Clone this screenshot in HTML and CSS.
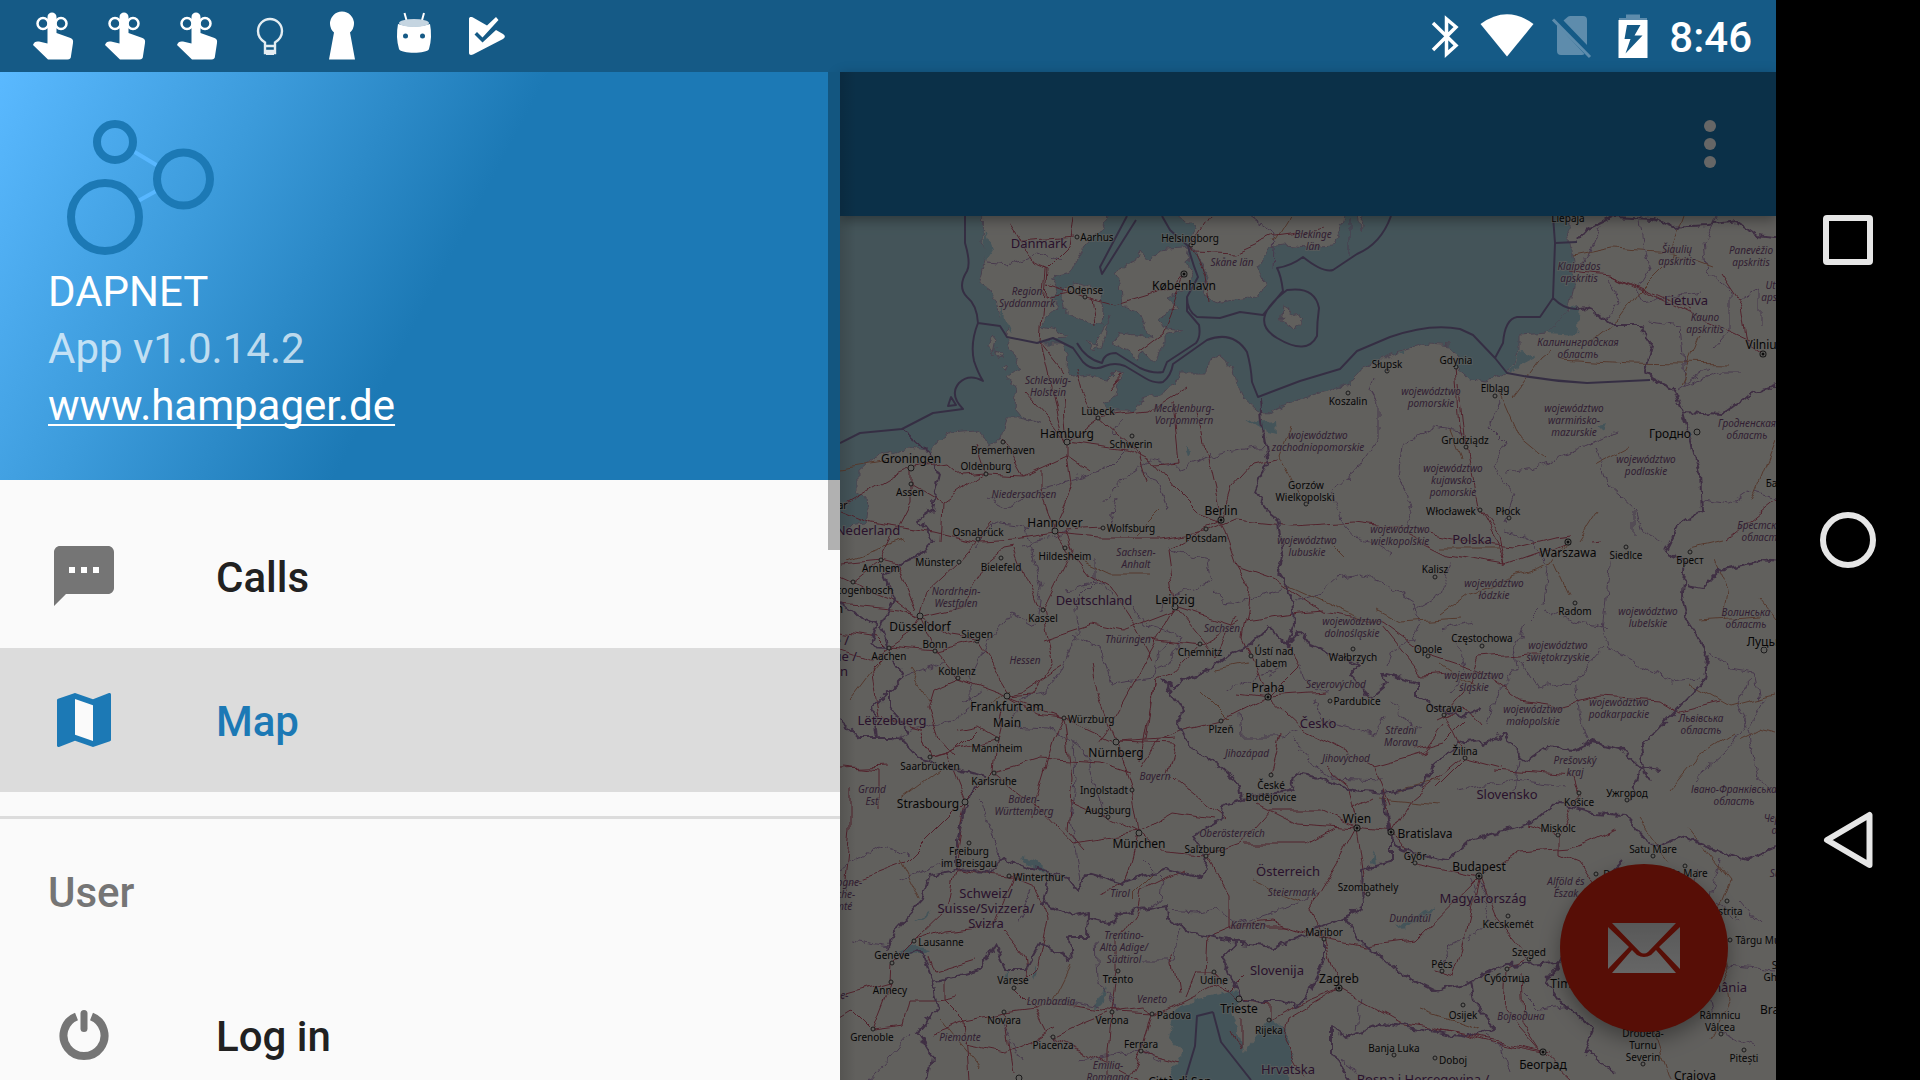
FILE: index.html
```html
<!DOCTYPE html>
<html lang="en">
<head>
<meta charset="utf-8">
<meta name="viewport" content="width=device-width, initial-scale=1">
<title>DAPNET</title>
<link rel="stylesheet" href="styles.css">
</head>
<body>
<div class="device">
  <div class="screen">
    <header class="status">
      <div class="status-left">
        <svg class="note" viewBox="0 0 72 72" aria-hidden="true"><g id="reminder"><path fill="#fff" d="M29.500 17c0-6 9-6 9 0v16l14 5c2 1 3 2 2.500 5l-2 13c0 2-1 3.500-3.500 3.500H30L15 45c1-3 3-4 6-3.500l8.500 2z"/><circle cx="25" cy="23.500" r="5.500" fill="none" stroke="#fff" stroke-width="2.500"/><circle cx="43" cy="23.500" r="5.500" fill="none" stroke="#fff" stroke-width="2.500"/></g></svg>
        <svg class="note" viewBox="0 0 72 72" aria-hidden="true"><use href="#reminder"/></svg>
        <svg class="note" viewBox="0 0 72 72" aria-hidden="true"><use href="#reminder"/></svg>
        <svg class="note" viewBox="0 0 72 72" aria-hidden="true"><path fill="none" stroke="#e4edf2" stroke-width="2.400" d="M31 53V42.500c-4-2.500-7-6-7-11.500a12 12 0 0 1 24 0c0 5.500-3 9-7 11.500V53zM31 46h10M31 51h10"/><path fill="#e4edf2" d="M32 51h8v4h-8z"/></svg>
        <svg class="note" viewBox="0 0 72 72" aria-hidden="true"><path fill="#fff" d="M28 32.500a12 12 0 1 1 16 0L49 59.500H23z"/></svg>
        <svg class="note" viewBox="0 0 72 72" aria-hidden="true"><path stroke="#fff" stroke-width="2" d="M26.500 13l2.500 9M46 13l-2.500 9"/><path fill="#fff" d="M20 24q16 5 32 0 2.500 13-1 25c-2 5-28 5-30 0q-3.500-12-1-25z"/><ellipse cx="36" cy="23" rx="15" ry="4" fill="#c5d5e1"/><circle cx="27.500" cy="36" r="2.500" fill="#155a86"/><circle cx="44.500" cy="36" r="2.500" fill="#155a86"/></svg>
        <svg class="note" viewBox="0 0 72 72" aria-hidden="true"><path fill="#fff" d="M19 19c0-2 2-2.500 4-1.500l14 8L46 17l2.500 3-16 17.500-5.500-5.500-2.500 2.500 8 8L46 30l7 4c2.500 1.500 2.500 3.500 0 5L23 54.500c-2 1-4 .5-4-1.500z"/></svg>
      </div>
      <div class="status-right">
        <svg class="sys" viewBox="-32 0 63 72" aria-hidden="true"><path fill="none" stroke="#fff" stroke-width="3.500" d="M-12 23L11 45.500 1.500 54V19L11 27-12 50"/></svg>
        <svg class="sys" viewBox="-31 0 63 72" aria-hidden="true"><path fill="#fff" d="M0 56.500L-26.500 24Q0 4.500 26.500 24z"/></svg>
        <svg class="sys" viewBox="-31 0 63 72" aria-hidden="true"><path fill="#5e8cac" d="M-6.500 20.500L-3 17.500q1-1.500 3-1.500H13q4 0 4 4v25zM-13 24.500L14.500 54q-1 1-3 1H-9q-4 0-4-4z"/><path stroke="#5e8cac" stroke-width="3" d="M-17 19.500L20 57"/></svg>
        <svg class="sys" viewBox="-31 0 63 72" aria-hidden="true"><path fill="#5e8cac" d="M-7 14.500H7V18h7v3h-28v-3h7z"/><path fill="#fff" fill-rule="evenodd" d="M-14.500 20h29v38h-29zM-6 25l-2.500 14h6l-5 14.500 17-18H1.500L7.500 25z"/></svg>
        <time class="clock">8:46</time>
      </div>
    </header>

    <div class="app">
      <aside class="drawer">
        <div class="account">
          <svg class="logo" viewBox="48 112 168 144" role="img" aria-label="DAPNET logo"><path stroke="#58b7ff" stroke-width="4" d="M133 151l25 15M138 201l20-11"/><g fill="none" stroke="#1c79b5" stroke-width="8"><circle cx="115" cy="142" r="18"/><circle cx="183.500" cy="179" r="26.500"/><circle cx="105" cy="217" r="34"/></g></svg>
          <p class="name">DAPNET</p>
          <p class="version">App v1.0.14.2</p>
          <a class="site" href="#site">www.hampager.de</a>
        </div>
        <nav class="menu">
          <a class="item" href="#calls"><svg class="icon" viewBox="0 0 24 24" aria-hidden="true"><path fill="#757575" d="M20 2H4c-1.100 0-2 .9-2 2v18l4-4h14c1.100 0 2-.9 2-2V4c0-1.100-.9-2-2-2z"/><path fill="#fff" d="M7 9h2v2H7zM11 9h2v2h-2zM15 9h2v2h-2z"/></svg><span>Calls</span></a>
          <a class="item active" href="#map" aria-current="page"><svg class="icon" viewBox="0 0 24 24" aria-hidden="true"><path fill="#1c79b5" d="M20.500 3l-.16.03L15 5.100 9 3 3.360 4.900c-.21.07-.36.25-.36.48V20.500c0 .28.220.5.500.5l.16-.03L9 18.900l6 2.100 5.640-1.900c.21-.07.36-.25.36-.48V3.500c0-.28-.22-.5-.5-.5z"/><path fill="#fafafa" d="M15 19l-6-2.110V5l6 2.110z"/></svg><span>Map</span></a>
        </nav>
        <nav class="menu user">
          <h2 class="group">User</h2>
          <a class="item" href="#login"><svg class="icon" viewBox="0 -1 72 72" aria-hidden="true"><path fill="none" stroke="#757575" stroke-width="8" d="M28.500 16.500a20.500 20.500 0 1 0 15 0"/><path stroke="#757575" stroke-width="7" stroke-linecap="round" d="M36 13.500v15"/></svg><span>Log in</span></a>
        </nav>
        <div class="scrollbar"></div>
      </aside>

      <main class="content">
        <div class="toolbar">
          <button class="more" type="button" aria-label="More options"><svg viewBox="0 0 72 72" aria-hidden="true"><circle cx="36" cy="18" r="6"/><circle cx="36" cy="36" r="6"/><circle cx="36" cy="54" r="6"/></svg></button>
        </div>
        <div class="map">
          <svg class="chart" viewBox="840 216 936 864" preserveAspectRatio="xMinYMin slice" role="img" aria-label="Map of central Europe">
            <defs>
              <filter id="rough" filterUnits="userSpaceOnUse" x="820" y="196" width="976" height="904"><feTurbulence type="fractalNoise" baseFrequency="0.09" numOctaves="3" seed="4"/><feDisplacementMap in="SourceGraphic" scale="10" xChannelSelector="R" yChannelSelector="G"/></filter>
              <filter id="bend" filterUnits="userSpaceOnUse" x="820" y="196" width="976" height="904"><feTurbulence type="fractalNoise" baseFrequency="0.04" numOctaves="2" seed="9"/><feDisplacementMap in="SourceGraphic" scale="12" xChannelSelector="R" yChannelSelector="G"/></filter>
            </defs>
            <rect class="sea" x="820" y="196" width="980" height="904"/>
            <g class="land" filter="url(#rough)">
              <path d="M820 530L866 524 868 510 867 497 858 493 858 470 873 457 907 448 930 453 937 440 950 432 977 430 982 440 990 445 1000 440 1007 418 1020 418 1040 422 1022 417 1013 407 1015 387 1007 377 1020 367 1005 337 1006 323 997 310 990 290 980 283 987 260 982 243 983 200H1108V216L1103 230 1090 237 1078 257 1070 273 1053 277 1057 287 1053 297 1058 307 1047 317 1042 327 1057 330 1068 337 1053 338 1040 343 1060 343 1068 353 1067 370 1073 377 1087 375 1107 380 1117 370 1125 373 1117 383 1115 397 1103 405 1107 410 1127 410 1133 413 1140 400 1163 392 1177 383 1180 373 1207 373 1208 360 1220 355 1233 367 1237 383 1243 397 1257 410 1267 414 1297 400 1327 392 1347 385 1360 370 1373 363 1393 353 1430 343 1450 345 1460 357 1457 370 1470 379 1487 381 1507 373 1520 353 1520 335 1547 333 1567 313 1573 287 1573 263 1568 230V200H1800V1100H820z"/>
              <path d="M1060 297l3-9 17-6 20 8 3 20-1 15-15-2-14-6-11-10zM1113 273l24-13 3-10 10 12 10-12 30-3-3 13 5 17-9 13-16 7 11 10-18 10 3 10 20 3-18 5v8l-10 20-15-13-3 8-25-15 8-10 30 4-10-24-18-6-2-24zM1110 317l-10 33-4-7zM1173 210l22 20-5 13 18 34-5 20 17 5 37-5 8-14-7-16 12-20 13-2 24 2 26-2 10-18 4-24zM1358 210h6l-4 22zM1283 306l19 12-4 12-17-8zM1088 340l10 4-4 6zM993 335l4 5-3 14-5-8zM996 350l6 2-2 6zM1000 368l8-3-3 8z"/>
            </g>
            <g class="sea" filter="url(#rough)">
              <path d="M820 480l20 12 12 20-4 22-28-6zM1547 333l23-23 10-3-3 28zM1508 373l14-21 13 5-15 8zM1175 1008l18-8 27-6 12-4 8 8-8 14 13 41 15-23 10-12 15 12 7 20-4 40h-114l-4-20 7-7 5-10-14-16zM1020 857l14 2 16 14-10-1zM898 952l12-8 20 4-8 6zM1106 986l-4 18-8 8 1-10zM1397 927l12-9 27-11-6 9-20 10zM1374 850l2 14-5-2zM1008 968l-4 20 4-8zM1038 966l-6 10 2 6zM1244 418l12 4 20-2 1 14-16-4zM1185 445l7 6-4 6zM1399 352l8-2-4 6zM985 230l8 20-6 10-4-10zM1000 300l6 20 6 14-10-12zM914 922l16-12-6 8zM1598 426l8-2-3 7z"/>
            </g>
            <g class="district" filter="url(#rough)">
              <path d="M988 262l20 2 20-6 10-6 20 8M1250 216l25 18-2 34M1350 220v34M987 497l20 10 40-20 60-18 20-20-14-14 8-16M1102 504l26-30 22-14 30 8 30-12 38-8 20-2M1168 510l-10-28-18-12M1168 550l40 10 4 22-44 16-6 12M1212 590l16 14 54-14M975 548l20-26 30 4 8 30 8 30-6 40-24-14-24 30-16 34 2 30-20 14-40 10-20 10M1022 546l36-10 12-8M1065 590l40-8 6 14M1110 530l6-30M1095 556v26l-20 20 4 30-20 40-14 20-24 6-12 28 40 2 36 20 8 30 12 40M1072 636l28 10 12 38 40-6 6-26 16-14M1130 604l16 22 36 10-14 28-14 6M982 690l-20 14M905 676l40-14M1073 740l2 40-4 40 10 60M980 800l20 60M1142 860l20 20-2 20-24 14M1166 910l30 2 20-4 20 16 60-20 20-10M1180 930l-8 30-30 0M1096 940l2 40 20 30M1020 920l10-30M900 880l50-20M840 870l40-24 30 10M1500 400l-12 26 16 16-10 24 20 28-10 30M1506 472l30-4 50-22 30-14M1596 448l12 36 26 24 0 30M1636 510l6 22 20 10M1612 548l-4 34-6 46 6 18 30 20 36 16 26-4M1506 532l26 8 16 28-4 36-20 20-10 30 2 14-20 26-10 30M1544 610l30 12 36 6M1604 646l-28 34-38 8-14-22-8-4M1575 680l4 30 8 30M1374 376l-4 14 8 14v36l-30 40-16 10 8 30 16 18 20 6 14 10M1402 446l-4 30 14 30-8 20M1402 444l30-16 30 4M1296 600l26-8 16-14 20-4 24 8 32 20 6 20-8 20-20 10-6 14M1440 630l30-8M1450 560l-8 34-28 16M1240 712l2 24 40 0 16-6M1292 736l20 28 20 14 50 2M1314 700l6 20 56 14 8-20M1300 665l4 14 24 16M1224 690l44-16 20-10M1392 700l8 16 20 12M1456 638l10 36-16 20M1456 790l60-10 50 6M1520 760l-4 30M1600 226l-12 30-10 12M1640 220l4 30 6 20-14 22 6 10 60-10M1608 282l12 20-14 20M1716 216l-12 28 4 28 22 20 0 40-18 20M1650 322l30 4 6 60 34-14 20 0M1678 390l30-22M1740 300l20-12v38M1702 500l28 4 20-14 26 8M1710 654l20 14 24 4 6 30M1750 680l-12 24 8 20-22 30-30 26M1764 700l-16 30 10 50 18 12M1490 900l-12-20M1470 880l20 40-24 20M1440 975l10-30 20-10M1700 870l-10 20M1720 860l-10 40 30 20M1740 900l20 24M1700 960l36 6 40 4M1710 1000l6 30 40 16M1340 1060l30 20M1360 1000l-4 30M1480 1030l20 14 10 30M1520 990l20 20 30-4M1020 1060l-20-40M1060 1050l-10-16M1080 1060l60-10 20 10M870 1080l40-46M1060 1000l40 8M850 940l40 6"/>
            </g>
            <g class="minor" filter="url(#bend)">
              <path d="M842 470l60-10M846 560l60-20M850 700l30-40M1050 1006l20-40M940 1020l40 50M1500 392l20 46 24 20M1512 398l30-40 10-8M1560 358l70 4 100 2M1572 256l40-8 60 4 40 14M1684 216l-16 46-30 30-22 30-30 24M1700 335l-20 50M1752 500l24-60M1290 216l-16 26M1306 504l-26-50 10-28M1284 583l66 30 28 10M1378 610l22 12 60-4M1440 614l30-22 80-28 14-20M1568 542l-10 14M1555 564l14 30M1580 540l18-28M1596 466l34-18M1440 665l36 24M1700 620l60-4M1690 684l40 22 46-12M1740 740l20-10 16 4M1668 792l30-36 34-22M1640 820l30 40M1690 830l40 50-20 50M1600 910l24-30M1720 940l10 60-20 40M1650 1020l20 60M1400 790l40-10M1380 800l60 6M1200 690l30 30M1218 670l30-6M1130 540l30-30M1010 690l-30 20M930 700l-20-30M1080 560l30 14 40 0M900 800l40-30M900 860l20 40M1160 870l-30 30M1250 880l50 20M1440 548l60 0M1346 560l-20-20M1450 430l12 30M1688 548l34-8M1714 560l14 30-4 30M1760 600l16 20M1420 1010l60 20M1560 960l40 20"/>
            </g>
            <g class="road" filter="url(#bend)">
              <path d="M1010 226l24 36 14 6-2 30 30-6M1072 216l-4 30-20 20M1046 268l-6 74 14 60 10 40M1018 240l56-4M1048 284l37 13 30 8 60-18 9-13M1090 297l4 28M1191 245l14 30 4 28M1191 245l20-29M1195 252l40 2 40-18 30-4 20-4M1184 274l-14 40-8 20-24 18M1040 342l24 30M1098 418l-32 24-20-26-22-24M1067 442l-4-48M1098 418l-14-26-6-24M1108 390l14-16M1098 418l48-6 40-26M1067 442l0 14-44 20-37-2-10-30M1067 456l4 30-20 45M1023 476l-20-36M986 474l-42 30-2 40M1067 442l60 8 28 14 20 24 24 24 22 8M1098 418l40 36 8 28M1155 464l24-2-6-60M1221 520l10-32 22-24 26-6M1221 520l-16-70-8-40M1067 456l20 14M911 468l-20 8-48 28M911 468l0 34-30 58M911 468l36-6 16 14 23-2M911 484l24 14 8 6M840 510l30 12 66 10 42 10 36-2 40-6 48 4 60 0 48-8 24-10 60 6 60-4 60 8 60 12 40 4 40-10 16-2M840 564l40-4 16 4 20 46M881 560l-28 22-13-6M853 582l40 16 24 18M840 604l60 6 20 6 6-24 32-30 20-22 14-16M920 616l44-10 24-46 15-12 11-2M1014 548l22 56 7 6 30-60-8-18M1055 531l12 18 20 26 24 14 20 30 22 40M1055 531l-14-41 0-20M1103 528l-38 2M920 616l15 35 23 27 49 18 57 22 52 24 60-4M935 651l-46-4-20 14-29-10M889 647l20-14 11-17M935 651l42-10 30 50M920 616l30 20 26 4M889 648l-10-10-39-6M1043 610l10 54-20 30-26 2M1043 640l50-16 30 6 52-20M1175 607l40 50 20-40M1175 607l-22 40-44 80-12 15M1175 607l-8-56 40-24 14-6M1221 520l16 46 14 24-4 26-4 22 8 18M1237 566l40 14 46 32 60 10 44 32 54 18M1245 620l56-8 22-2M1175 607l56 18M1150 640l48 6 40-24M1200 644l-30 32-16 4-10 60-4 20M1154 680l-8 60M1007 696l-10 43-3 34-29 29-8 44M1007 696l16-4 40-26M997 739l-67 18-10-30-40-10-8-50 20-20M930 757l26-6 20-20M958 678l-24 10-6 20 10 30 18 20M997 739l-20-12-20 4M994 773l46-14 60 4 30 10M1064 718l-10 20-18 60-2 20M1064 718l8 60-4 54 16 18M1007 696l30 18 34 4M1116 742l-20-50-6-30M1116 742l16 48 7 43M1116 742l60 2-8 30 8 8M1108 817l31 16M994 773l50 40 28 30 67-10M1070 800l38 17M1139 833l24 20 43 3 24 40 0 30 60 0M1206 856l34-12 30-34 50 0 37 18M1244 844l60 0 30-16M1176 780l50 40M1139 833l-14 50-26 10M1139 833l34-20 40 6M965 802l-30 30-30 30-65 24M880 810l0-40-36-4M965 802l-20-50M850 790l0 40-6 60M840 768l50-2M957 846l-1 22 30 6 23 2 30-2M956 868l-8 40-34 33-22 22-1 20-50 14M914 941l30-10 50-6 20-50M928 956l6 16 40-12M1009 876l24 10 10 18M1043 904l4 14-10 50-20 20M1004 930l20 24 4 26M891 983l-18 46-20-20-13 8M873 1029l30-4 6-24 30 0 20-4M964 1020l40-8 60-8 50 8 40 2 20-10 40-20 16 6 14-14M1004 1012l10 60M964 1020l4 60M932 1032l32-12-20-20 0-20M964 1044l40 8 20-8 30-18M1014 988l20 20M1112 1012l6-41 0-30 20-30 4-20 40-20M1112 1012l-4 40 0 28M1112 1012l30-4 10 6-10 37-16 30M1053 1037l34-16 20-8M1053 1037l60 30 24 13M1141 1051l40 10M1035 1010l10 20M1178 994l-6-40M1239 999l-25-27-20 0-10 24M1206 975l2-40 24-10 40-4 54 18M1239 999l30 6 0 15 40-20 30-12M1230 1030l10 20 0-30M1339 988l-15-49-14-30 30-50 17-31M1324 939l40 8 50-6 66-65M1339 988l60 34 60 10 90 20M1339 988l-50 30-4 24 20 36M1357 828l34 4 24 31 64 13M1357 828l-60-4-40-20M1357 828l-4-20 20-10M1383 790l8 42M1391 832l20-32 50-42M1357 828l-8-40-24-20M1268 697l-47 24-40 10-24 10-16 24M1268 697l58-4M1268 697l36 34 30 14 40 22 50-14 20-28M1374 766l16 40M1268 697l-20-50M1268 697l30-30-10-24M1268 697l-30-4M1271 775l10-40M1444 715l26-30 10-28 50-4 10 0M1382 626l40 50 60-4M1444 715l20 42 38 10M1416 750l28-8 20-20M1436 720l30-14 16 20M1480 670l40 30 40 6 40-10 60 4 20 12 40-10M1465 758l-30 30M1494 770l80 6 5 17M1579 793l-21 42-30-10M1479 876l40-24 50-4 16-6 30-14M1558 835l0 20 20 8 16 24M1479 876l16 40 34 43-22 10-2 40 38 43M1479 876l-16 70-10 30-20-6M1543 1052l-50-10-60-16M1543 1052l30 28M1543 1052l-20-30-2-50M1456 367l4 60 6 20 12 60 22 40 6 20M1466 447l-6-60M1506 566l-60-10-40-20M1506 566l40-14 22-10M1592 541l10-1M1506 566l-6-30-20-26M1570 270l40 4 80 40 60 28M1610 274l80 36M1722 274l20 30 6 40 15 10M1776 500l-50 40M1357 828l10 66"/>
            </g>
            <g class="border" filter="url(#rough)">
              <path d="M1260 397l2 26 6 37-13 33 12 17 10 8 6 35-6 20 16 25 2 26-8 20M1162 680l11 10 8-10 26-8 23-18 20-9 18-17 19 17 13-14 10 14 24 10 26 10-10 10 20 22 17-14-7-10 37 10v12l16 10 27 14 20-10M1162 680l20 30-5 12 13 25 30 20 20 18 2 16-19 6-3 13-27 16 14 22-4 20-36-10-44 15-35-10-10 18-11-13-14-5M1242 800l51-10 2-17 25 5 33 12 30 3 40-7 10-20 27-23 20-3 3 5 22-13 15 25 7 3 20-13 26 3 20-8 27 7 20 18 20 3M1577 309l10-2 26 18 27 0 12 18-7 27 5 7 23 12 10 23 17 62 2 37-25 16-12 24 20 10-3 33 5 27 20 31-3 29-64 66 4 27 6 8M1683 412l40 2 23-17 30-12M1687 585l16 3 17-18 40-9 20 2M1640 767l-10 33M1577 242l10-12 26-13 40 2 20 8 34-2 30-4 20 14 30 3M1383 790l8 47 8 13 47 10 24-20 36-10 31-10 20-17 36 10 31 2 20 22 12 10 24-10 67 23 30-13M1624 860l-20 20-20 50-23 32-55 3-36 18-36 7-27-13-48-37-16-23 20-10-2-37 30-8v-25M1545 980l16 23 32 27-8 20 31 23M1561 962l-16 18M1470 983l4 20 20 24-28 10-83-14-36 14-15-10 0 26 19 30M1324 939l0 21-24 47-20-6-40 0M888 948l5-15 30-33 7-25 27-5 30 2 16-14 24 9 26 5-10 31 30 14 15-4-1 24-17 0 2 23-32-17-15 27-18 0-12-25-15 25-47 13-11-33-22 3M933 983l4 27-20 23 15 24-5 30M1088 918l22 5 13-11 44-7 1 15 22 13 43 9 40 5 37-14 33-16M1237 943l-14 14 10 26 8 16M977 780l-12 30-8 30v30M987 777l-37-10-30-7-20-22-40 0-20-18M877 738l-4-31 17-17 13-13-10-17M907 733l-17-30v-13M840 603l20 14 17 6-7 24 18 1-8-20 15-28-12-27 34-16 16-17-15-20 15-10 2-17 5-20-12-20-26-23"/>
            </g>
            <g class="border maritime">
              <path d="M965 216v27q6 20 2 28-10 16 0 26 10 8 11 26-8 20-4 38 4 12 9 20-14-8-24 2-10 12 4 26l-30 4-31 16-42 4-20 10M978 323l22 3 7 11 30 6 16-5 20 10 10 14q10 10 22 4 10-4 20 0l20 12q10 6 18 4 8-6 10-18l34-24q26-10 40 12 4 14 5 30l6 15 42-16 40-12 17-18 33-14q40-14 70-8l13 6 22 23 12 15q40 8 80 10l63-3M1495 358l8-15q2-24 14-26h23l13-19 2-55-2-27M1553 298q12 12 24 11M1555 243l22-1M1162 216l8 14 18 16q4 16 10 31l-11 20q0 14 10 20l23 1 20-6 23 3 20-24q-2-16-6-23 14-2 26-11 20 16 30 13l24-16q24-10 34-38M1287 290q-40 30-10 48 30 18 40-2 0-14 2-28-4-22-32-18zM1127 216l-27 51 2 7 34-54M1187 297v14l12 14q2 12-3 18l-29 19-4 10q-10 2-23-4l-24-15q-12 0-14 10-16-4-25-20M951 397l-3 9 8-1zM1213 1012l-16 4-2 30-12 40M1213 1012l8 30 30 38"/>
            </g>
            <g class="dots">
              <circle cx="1077" cy="237" r="2"/><circle cx="1085" cy="297" r="2"/><circle cx="1191" cy="245" r="2"/><circle cx="1098" cy="418" r="2"/><circle cx="1067" cy="442" r="3"/><circle cx="1003" cy="442" r="2"/><circle cx="986" cy="474" r="2"/><circle cx="1132" cy="436" r="2"/><circle cx="911" cy="468" r="3"/><circle cx="911" cy="484" r="2"/><circle cx="978" cy="539" r="2"/><circle cx="959" cy="562" r="2"/><circle cx="1001" cy="558" r="2"/><circle cx="1055" cy="531" r="3"/><circle cx="1065" cy="548" r="2"/><circle cx="1103" cy="528" r="2"/><circle cx="881" cy="560" r="2"/><circle cx="853" cy="582" r="2"/><circle cx="920" cy="616" r="3"/><circle cx="977" cy="641" r="2"/><circle cx="1043" cy="610" r="2"/><circle cx="935" cy="651" r="2"/><circle cx="889" cy="648" r="2"/><circle cx="958" cy="678" r="2"/><circle cx="1007" cy="696" r="3"/><circle cx="997" cy="739" r="2"/><circle cx="930" cy="757" r="2"/><circle cx="994" cy="773" r="2"/><circle cx="1064" cy="718" r="2"/><circle cx="1116" cy="742" r="3"/><circle cx="1132" cy="790" r="2"/><circle cx="965" cy="802" r="3"/><circle cx="969" cy="843" r="2"/><circle cx="1009" cy="876" r="2"/><circle cx="1139" cy="833" r="3"/><circle cx="1108" cy="817" r="2"/><circle cx="1206" cy="856" r="2"/><circle cx="1206" cy="529" r="2"/><circle cx="1175" cy="607" r="3"/><circle cx="1200" cy="644" r="2"/><circle cx="1251" cy="656" r="2"/><circle cx="1221" cy="721" r="2"/><circle cx="1330" cy="701" r="2"/><circle cx="1271" cy="775" r="2"/><circle cx="1306" cy="504" r="2"/><circle cx="1348" cy="393" r="2"/><circle cx="1387" cy="371" r="2"/><circle cx="1456" cy="367" r="2"/><circle cx="1495" cy="396" r="2"/><circle cx="1466" cy="447" r="2"/><circle cx="1480" cy="510" r="2"/><circle cx="1509" cy="518" r="2"/><circle cx="1626" cy="547" r="2"/><circle cx="1435" cy="577" r="2"/><circle cx="1353" cy="649" r="2"/><circle cx="1428" cy="656" r="2"/><circle cx="1482" cy="646" r="2"/><circle cx="1575" cy="603" r="2"/><circle cx="1444" cy="715" r="2"/><circle cx="1465" cy="758" r="2"/><circle cx="1579" cy="793" r="2"/><circle cx="1627" cy="800" r="2"/><circle cx="1690" cy="552" r="2"/><circle cx="1764" cy="650" r="3"/><circle cx="1697" cy="432" r="3"/><circle cx="1415" cy="863" r="2"/><circle cx="1368" cy="894" r="2"/><circle cx="1508" cy="916" r="2"/><circle cx="1529" cy="959" r="2"/><circle cx="1442" cy="971" r="2"/><circle cx="1324" cy="939" r="2"/><circle cx="1463" cy="1005" r="2"/><circle cx="1507" cy="969" r="2"/><circle cx="1394" cy="1055" r="2"/><circle cx="1435" cy="1058" r="2"/><circle cx="1239" cy="999" r="3"/><circle cx="1269" cy="1020" r="2"/><circle cx="1214" cy="972" r="2"/><circle cx="1152" cy="1014" r="2"/><circle cx="1112" cy="1012" r="2"/><circle cx="1118" cy="971" r="2"/><circle cx="1014" cy="988" r="2"/><circle cx="1004" cy="1012" r="2"/><circle cx="1053" cy="1037" r="2"/><circle cx="1141" cy="1051" r="2"/><circle cx="914" cy="941" r="2"/><circle cx="892" cy="963" r="2"/><circle cx="891" cy="982" r="2"/><circle cx="873" cy="1029" r="2"/><circle cx="1019" cy="1078" r="3"/><circle cx="1558" cy="835" r="2"/><circle cx="1653" cy="856" r="2"/><circle cx="1685" cy="866" r="2"/><circle cx="1596" cy="874" r="2"/><circle cx="1727" cy="901" r="2"/><circle cx="1730" cy="940" r="2"/><circle cx="1721" cy="1034" r="2"/><circle cx="1744" cy="1050" r="2"/><circle cx="1643" cy="1064" r="2"/>
            </g>
            <g class="capitals">
              <defs><path id="caps" d="M1184 274h0M1221 520h0M1268 697h0M1568 542h0M1763 354h0M1357 828h0M1391 832h0M1479 876h0M1339 988h0M1543 1052h0"/></defs>
              <use class="ring" href="#caps"/><use class="gap" href="#caps"/><use class="core" href="#caps"/>
            </g>
            <g class="region">
              <text x="1027" y="291">Region</text><text x="1027" y="303">Syddanmark</text><text x="1048" y="380">Schleswig-</text><text x="1048" y="392">Holstein</text><text x="1024" y="494">Niedersachsen</text><text x="1232" y="262">Skåne län</text><text x="1313" y="234">Blekinge</text><text x="1313" y="246">län</text><text x="1184" y="408">Mecklenburg-</text><text x="1184" y="420">Vorpommern</text><text x="1318" y="435">województwo</text><text x="1318" y="447">zachodniopomorskie</text><text x="1431" y="391">województwo</text><text x="1431" y="403">pomorskie</text><text x="1453" y="468">województwo</text><text x="1453" y="480">kujawsko-</text><text x="1453" y="492">pomorskie</text><text x="1579" y="266">Klaipėdos</text><text x="1579" y="278">apskritis</text><text x="1677" y="249">Šiaulių</text><text x="1677" y="261">apskritis</text><text x="1751" y="250">Panevėžio</text><text x="1751" y="262">apskritis</text><text x="1781" y="285">Utenos</text><text x="1780" y="297">apskritis</text><text x="1705" y="317">Kauno</text><text x="1705" y="329">apskritis</text><text x="1578" y="342">Калининградская</text><text x="1578" y="354">область</text><text x="1574" y="408">województwo</text><text x="1574" y="420">warmińsko-</text><text x="1574" y="432">mazurskie</text><text x="1646" y="459">województwo</text><text x="1646" y="471">podlaskie</text><text x="1747" y="423">Гродненская</text><text x="1747" y="435">область</text><text x="1136" y="552">Sachsen-</text><text x="1136" y="564">Anhalt</text><text x="956" y="591">Nordrhein-</text><text x="956" y="603">Westfalen</text><text x="1025" y="660">Hessen</text><text x="1128" y="639">Thüringen</text><text x="872" y="789">Grand</text><text x="872" y="801">Est</text><text x="1155" y="776">Bayern</text><text x="1307" y="540">województwo</text><text x="1307" y="552">lubuskie</text><text x="1400" y="529">województwo</text><text x="1400" y="541">wielkopolskie</text><text x="1352" y="621">województwo</text><text x="1352" y="633">dolnośląskie</text><text x="1222" y="628">Sachsen</text><text x="1336" y="684">Severovýchod</text><text x="1247" y="753">Jihozápad</text><text x="1346" y="758">Jihovýchod</text><text x="1401" y="730">Střední</text><text x="1401" y="742">Morava</text><text x="1494" y="583">województwo</text><text x="1494" y="595">łódzkie</text><text x="1558" y="645">województwo</text><text x="1558" y="657">świętokrzyskie</text><text x="1474" y="675">województwo</text><text x="1474" y="687">śląskie</text><text x="1533" y="709">województwo</text><text x="1533" y="721">małopolskie</text><text x="1619" y="702">województwo</text><text x="1619" y="714">podkarpackie</text><text x="1648" y="611">województwo</text><text x="1648" y="623">lubelskie</text><text x="1762" y="525">Брестская</text><text x="1762" y="537">область</text><text x="1746" y="612">Волинська</text><text x="1746" y="624">область</text><text x="1701" y="718">Львівська</text><text x="1701" y="730">область</text><text x="1575" y="760">Prešovský</text><text x="1575" y="772">kraj</text><text x="1734" y="789">Івано-Франківська</text><text x="1734" y="801">область</text><text x="1792" y="818">Чернівецька</text><text x="1792" y="830">область</text><text x="1024" y="799">Baden-</text><text x="1024" y="811">Württemberg</text><text x="1232" y="833">Oberösterreich</text><text x="1120" y="893">Tirol</text><text x="1292" y="892">Steiermark</text><text x="1248" y="925">Kärnten</text><text x="1124" y="935">Trentino-</text><text x="1124" y="947">Alto Adige/</text><text x="1124" y="959">Südtirol</text><text x="1051" y="1001">Lombardia</text><text x="1152" y="999">Veneto</text><text x="960" y="1037">Piemonte</text><text x="1108" y="1065">Emilia-</text><text x="1108" y="1077">Romagna</text><text x="836" y="882">Bourgogne-</text><text x="836" y="894">Franche-</text><text x="838" y="906">Comté</text><text x="826" y="995">Auvergne-</text><text x="1410" y="918">Dunántúl</text><text x="1566" y="881">Alföld és</text><text x="1566" y="893">Észak</text><text x="1521" y="1016">Војводина</text><text x="1788" y="873">Suceava</text>
            </g>
            <g class="town">
              <text x="1097" y="237">Aarhus</text><text x="1085" y="290">Odense</text><text x="1098" y="411">Lübeck</text><text x="1003" y="450">Bremerhaven</text><text x="986" y="466">Oldenburg</text><text x="1131" y="444">Schwerin</text><text x="910" y="492">Assen</text><text x="828" y="505">Alkmaar</text><text x="1190" y="238">Helsingborg</text><text x="1387" y="364">Słupsk</text><text x="1348" y="401">Koszalin</text><text x="1306" y="485">Gorzów</text><text x="1305" y="497">Wielkopolski</text><text x="1568" y="218">Liepāja</text><text x="1456" y="360">Gdynia</text><text x="1495" y="388">Elbląg</text><text x="1465" y="440">Grudziądz</text><text x="1794" y="483">Баранавічы</text><text x="978" y="532">Osnabrück</text><text x="1131" y="528">Wolfsburg</text><text x="935" y="562">Münster</text><text x="1001" y="567">Bielefeld</text><text x="1065" y="556">Hildesheim</text><text x="881" y="568">Arnhem</text><text x="852" y="590">'s-Hertogenbosch</text><text x="977" y="634">Siegen</text><text x="1043" y="618">Kassel</text><text x="935" y="644">Bonn</text><text x="889" y="656">Aachen</text><text x="957" y="671">Koblenz</text><text x="997" y="748">Mannheim</text><text x="930" y="766">Saarbrücken</text><text x="994" y="781">Karlsruhe</text><text x="1091" y="719">Würzburg</text><text x="1104" y="790">Ingolstadt</text><text x="1108" y="810">Augsburg</text><text x="969" y="851">Freiburg</text><text x="969" y="863">im Breisgau</text><text x="1039" y="877">Winterthur</text><text x="1205" y="849">Salzburg</text><text x="1206" y="538">Potsdam</text><text x="1200" y="652">Chemnitz</text><text x="1274" y="651">Ústí nad</text><text x="1271" y="663">Labem</text><text x="1221" y="729">Plzeň</text><text x="1357" y="701">Pardubice</text><text x="1271" y="785">České</text><text x="1271" y="797">Budějovice</text><text x="1451" y="511">Włocławek</text><text x="1508" y="511">Płock</text><text x="1626" y="555">Siedlce</text><text x="1435" y="569">Kalisz</text><text x="1353" y="657">Wałbrzych</text><text x="1428" y="649">Opole</text><text x="1482" y="638">Częstochowa</text><text x="1575" y="611">Radom</text><text x="1444" y="708">Ostrava</text><text x="1465" y="751">Žilina</text><text x="1579" y="802">Košice</text><text x="1627" y="793">Ужгород</text><text x="1690" y="560">Брест</text><text x="1415" y="856">Győr</text><text x="1368" y="887">Szombathely</text><text x="1508" y="924">Kecskemét</text><text x="1529" y="952">Szeged</text><text x="1442" y="964">Pécs</text><text x="1324" y="932">Maribor</text><text x="1463" y="1015">Osijek</text><text x="1507" y="978">Суботица</text><text x="1394" y="1048">Banja Luka</text><text x="1453" y="1060">Doboj</text><text x="1269" y="1030">Rijeka</text><text x="1214" y="980">Udine</text><text x="1174" y="1015">Padova</text><text x="1112" y="1020">Verona</text><text x="1118" y="979">Trento</text><text x="1013" y="980">Varese</text><text x="1004" y="1020">Novara</text><text x="1053" y="1045">Piacenza</text><text x="1141" y="1044">Ferrara</text><text x="941" y="942">Lausanne</text><text x="892" y="955">Genève</text><text x="890" y="990">Annecy</text><text x="872" y="1037">Grenoble</text><text x="1558" y="828">Miskolc</text><text x="1653" y="849">Satu Mare</text><text x="1684" y="873">Baia Mare</text><text x="1626" y="874">Debrecen</text><text x="1726" y="911">Bistrița</text><text x="1765" y="940">Târgu Mureș</text><text x="1787" y="965">Sfântu</text><text x="1787" y="977">Gheorghe</text><text x="1720" y="1015">Râmnicu</text><text x="1720" y="1027">Vâlcea</text><text x="1744" y="1058">Pitești</text><text x="1643" y="1033">Drobeta-</text><text x="1643" y="1045">Turnu</text><text x="1643" y="1057">Severin</text>
            </g>
            <g class="city">
              <text x="1067" y="433">Hamburg</text><text x="911" y="458">Groningen</text><text x="1184" y="285">København</text><text x="1221" y="510">Berlin</text><text x="1055" y="522">Hannover</text><text x="920" y="626">Düsseldorf</text><text x="1007" y="706">Frankfurt am</text><text x="1007" y="722">Main</text><text x="1116" y="752">Nürnberg</text><text x="928" y="803">Strasbourg</text><text x="1139" y="843">München</text><text x="1175" y="599">Leipzig</text><text x="1268" y="687">Praha</text><text x="1568" y="552">Warszawa</text><text x="1670" y="433">Гродно</text><text x="1764" y="344">Vilnius</text><text x="1764" y="641">Луцьк</text><text x="1357" y="818">Wien</text><text x="1425" y="833">Bratislava</text><text x="1479" y="866">Budapest</text><text x="1339" y="978">Zagreb</text><text x="1543" y="1064">Београд</text><text x="1239" y="1008">Trieste</text><text x="1578" y="983">Timișoara</text><text x="1779" y="1009">Brașov</text><text x="1695" y="1075">Craiova</text><text x="1180" y="1081">Città di San</text><text x="1803" y="1067">București</text><text x="812" y="608">Antwerpen</text>
            </g>
            <g class="country">
              <text x="1039" y="243">Danmark</text><text x="1686" y="300">Lietuva</text><text x="868" y="530">Nederland</text><text x="1094" y="600">Deutschland</text><text x="892" y="720">Lëtzebuerg</text><text x="1318" y="723">Česko</text><text x="1472" y="539">Polska</text><text x="1507" y="794">Slovensko</text><text x="986" y="893">Schweiz/</text><text x="986" y="908">Suisse/Svizzera/</text><text x="986" y="923">Svizra</text><text x="1288" y="871">Österreich</text><text x="1483" y="898">Magyarország</text><text x="1277" y="970">Slovenija</text><text x="1288" y="1069">Hrvatska</text><text x="1423" y="1079">Bosna i Hercegovina /</text><text x="1720" y="987">România</text><text x="826" y="640">België /</text><text x="826" y="656">Belgique /</text><text x="825" y="671">Belgien</text>
            </g>
          </svg>
          <button class="fab" type="button" aria-label="New message"><svg viewBox="0 0 72 50" aria-hidden="true"><defs><linearGradient id="paper" x2="0" y2="1"><stop offset="0" stop-color="#dcdcdc"/><stop offset="1" stop-color="#fff"/></linearGradient></defs><path fill="url(#paper)" d="M4 0h64L40 29q-4 3-8 0zM0 4l21 20L0 46zM72 4L51 24l21 22zM24 27l5 5q7 4 14 0l5-5 20 23H4z"/></svg></button>
        </div>
        <div class="scrim"></div>
      </main>
    </div>
  </div>

  <nav class="system-nav" aria-label="System">
    <button type="button" aria-label="Recent apps"><svg viewBox="0 0 72 72" aria-hidden="true"><rect x="14" y="14" width="44" height="44" rx="1"/></svg></button>
    <button type="button" aria-label="Home"><svg viewBox="0 0 72 72" aria-hidden="true"><circle cx="36" cy="36" r="25"/></svg></button>
    <button type="button" aria-label="Back"><svg viewBox="0 0 72 72" aria-hidden="true"><path d="M57.500 11v50L15 36z"/></svg></button>
  </nav>
</div>
</body>
</html>
```
FILE: styles.css
```css
* { box-sizing: border-box; }
body {
  margin: 0;
  background: #000;
  font-family: Roboto, "Noto Sans", sans-serif;
  font-size: 42px;
}
button { border: 0; padding: 0; background: none; cursor: pointer; }
svg { display: block; }

.device { display: flex; height: 100vh; overflow: hidden; }
.screen { flex: 1; min-width: 0; display: flex; flex-direction: column; }

/* Status bar */
.status {
  display: flex;
  justify-content: space-between;
  height: 72px;
  padding: 0 24px 0 18px;
  background: #155a86;
}
.status-left, .status-right { display: flex; align-items: center; }
.note { width: 72px; height: 72px; }
.sys { width: 63px; height: 72px; }
.clock { height: 72px; margin-left: 4px; color: #fff; font-weight: 500; line-height: 75px; }

/* App */
.app { flex: 1; min-height: 0; display: flex; }
.drawer {
  position: relative;
  z-index: 2;
  flex: 0 0 840px;
  overflow: hidden;
  background: #fafafa;
}
.account {
  height: 408px;
  padding: 40px 48px 0;
  background: linear-gradient(118deg, #5ab9ff 0%, #3c9bdb 26%, #1c79b5 52%, #1c79b5 100%);
  color: #fff;
  line-height: 57px;
}
.logo { width: 168px; height: 144px; margin-bottom: 7px; }
.account p { margin: 0; }
.version { color: rgba(255, 255, 255, 0.7); }
.site {
  color: #fff;
  text-decoration-thickness: 2px;
  text-underline-offset: 4px;
  text-decoration-skip-ink: none;
}
.menu { padding: 24px 0; }
.menu.user { padding: 0; border-top: 3px solid #dcdcdc; }
.item {
  display: flex;
  align-items: center;
  gap: 96px;
  height: 144px;
  padding: 0 48px;
  color: #212121;
  font-weight: 500;
  text-decoration: none;
}
.item span { padding-top: 2px; }
.item.active { background: #dcdcdc; color: #1c79b5; }
.icon { width: 72px; height: 72px; }
.group {
  height: 144px;
  margin: 0;
  padding: 0 48px;
  color: #757575;
  font-size: 42px;
  font-weight: 500;
  line-height: 147px;
}
.scrollbar {
  position: absolute;
  top: 0;
  right: 0;
  width: 12px;
  height: 478px;
  background: rgba(0, 0, 0, 0.29);
}

.content { position: relative; flex: 1; min-width: 0; display: flex; flex-direction: column; }
.toolbar {
  position: relative;
  z-index: 1;
  display: flex;
  align-items: center;
  justify-content: flex-end;
  height: 144px;
  padding: 0 30px;
  background: #1c79b5;
  box-shadow: 0 4px 12px rgba(0, 0, 0, 0.35);
}
.more svg { width: 72px; height: 72px; fill: #fff; }
.map { position: relative; flex: 1; min-height: 0; overflow: hidden; }
.chart { width: 100%; height: 100%; }
.scrim {
  position: absolute;
  inset: 0;
  z-index: 1;
  background: linear-gradient(90deg, rgba(0, 0, 0, 0.12), transparent 16px), rgba(0, 0, 0, 0.6);
  pointer-events: none;
}
.fab {
  position: absolute;
  right: 48px;
  bottom: 48px;
  display: flex;
  align-items: center;
  justify-content: center;
  width: 168px;
  height: 168px;
  border-radius: 50%;
  background: #d9230f;
  box-shadow: 0 8px 20px rgba(0, 0, 0, 0.35);
}
.fab svg { width: 72px; height: 50px; }

/* Map drawing */
.sea { fill: #aad3df; }
.land { fill: #f2efe9; stroke: #b9a5c4; stroke-width: 1; }
.district, .minor, .road, .border { fill: none; stroke-linejoin: round; }
.district { stroke: #b48fc0; stroke-width: 1; }
.minor { stroke: #d48e70; stroke-width: 1; }
.road { stroke: #cc566e; stroke-width: 1; }
.border { stroke: #9e74a8; stroke-width: 2; }
.maritime { stroke: #8674a8; }
.dots { fill: #f2efe9; stroke: #444; stroke-width: 1; }
.capitals { fill: none; stroke-linecap: round; }
.ring { stroke: #333; stroke-width: 7px; }
.gap { stroke: #f2efe9; stroke-width: 5px; }
.core { stroke: #222; stroke-width: 3px; }
.chart text {
  font-family: "Noto Sans", sans-serif;
  text-anchor: middle;
  dominant-baseline: central;
  paint-order: stroke;
  stroke: rgba(242, 239, 233, 0.6);
  stroke-width: 2px;
}
.town text { font-size: 10px; fill: #111; }
.city text { font-size: 12px; fill: #111; }
.region text { font-size: 10px; font-style: italic; fill: #7c4f80; }
.country text { font-size: 13px; fill: #6a2f70; }

/* System navigation */
.system-nav {
  display: flex;
  flex-direction: column;
  justify-content: center;
  flex: 0 0 144px;
  background: #000;
}
.system-nav button { display: flex; align-items: center; justify-content: center; height: 300px; }
.system-nav svg {
  width: 72px;
  height: 72px;
  fill: none;
  stroke: #e6e6e6;
  stroke-width: 6;
  stroke-linejoin: round;
}
```
